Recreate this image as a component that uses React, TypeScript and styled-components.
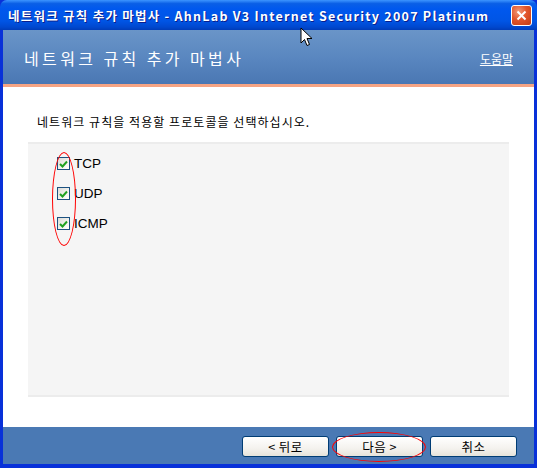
import { createGlobalStyle, styled } from 'styled-components';

const GlobalStyle = createGlobalStyle`
  html, body {
    margin: 0;
    padding: 0;
    background: #ffffff;
  }
  body {
    font-family: 'Noto Sans CJK KR', 'DejaVu Sans', sans-serif;
  }
`;

const Window = styled.div`
  position: relative;
  width: 537px;
  height: 468px;
  display: flex;
  flex-direction: column;
  background: #0831d9;
  box-sizing: border-box;
  overflow: hidden;
`;

const TitleBar = styled.div`
  height: 30px;
  display: flex;
  align-items: center;
  justify-content: space-between;
  padding: 0 5px 0 8px;
  border-radius: 7px 7px 0 0;
  background: linear-gradient(
    180deg,
    #3d95ff 0%,
    #0a5fe6 12%,
    #0058ee 30%,
    #0055e5 70%,
    #0048cf 90%,
    #003cb8 100%
  );
`;

const TitleText = styled.span`
  color: #ffffff;
  font-size: 12.5px;
  font-weight: 700;
  letter-spacing: 1.25px;
  white-space: nowrap;
  text-shadow: 1px 1px 0 #0a1e8c;
`;

const CloseButton = styled.div`
  width: 19px;
  height: 19px;
  border: 1px solid #ffffff;
  border-radius: 3px;
  display: flex;
  align-items: center;
  justify-content: center;
  background: radial-gradient(circle at 35% 30%, #f29a7a 0%, #e2562c 45%, #c23b12 100%);
`;

const Body = styled.div`
  flex: 1;
  display: flex;
  flex-direction: column;
  margin: 0 3px 4px 3px;
  background: #ffffff;
`;

const Header = styled.div`
  height: 54px;
  display: flex;
  align-items: center;
  justify-content: space-between;
  padding: 0 21px 0 21px;
  background: linear-gradient(180deg, #6a95c8 0%, #5a87c0 50%, #4a77b3 100%);
  border-bottom: 3px solid #f6a483;
`;

const HeaderTitle = styled.span`
  color: #ffffff;
  font-size: 16px;
  letter-spacing: 3.4px;
  margin-top: 2px;
`;

const HelpLink = styled.a`
  color: #ffffff;
  font-size: 12px;
  text-decoration: underline;
  margin-top: 2px;
`;

const Content = styled.div`
  flex: 1;
  display: flex;
  flex-direction: column;
  padding: 26px 25px 30px 25px;
`;

const Instruction = styled.p`
  margin: 0 0 12px 9px;
  font-size: 12px;
  color: #000000;
  letter-spacing: 1.05px;
`;

const Panel = styled.div`
  position: relative;
  flex: 1;
  display: flex;
  flex-direction: column;
  gap: 13px;
  padding: 11px 0 0 29px;
  background: #f5f5f5;
  border-top: 2px solid #ececec;
  border-bottom: 2px solid #ececec;
`;

const OptionRow = styled.label`
  display: flex;
  align-items: center;
  height: 17px;
  font-family: 'Liberation Sans', Arial, sans-serif;
  font-size: 13.5px;
  color: #000000;
`;

const Box = styled.span`
  width: 11px;
  height: 11px;
  border: 1px solid #1c5180;
  background: linear-gradient(135deg, #dcdcd7 0%, #f3f3ef 60%, #ffffff 100%);
  display: flex;
  align-items: center;
  justify-content: center;
  margin-right: 4px;
`;

const Footer = styled.div`
  height: 37px;
  display: flex;
  align-items: center;
  justify-content: flex-end;
  gap: 7px;
  padding: 0 17px 0 0;
  background: #4a79b4;
`;

const FooterButton = styled.button`
  position: relative;
  width: 87px;
  height: 21px;
  padding: 0;
  border: 1px solid #003c74;
  border-radius: 3px;
  background: linear-gradient(180deg, #ffffff 0%, #f4f2ee 60%, #e6e3da 100%);
  font-family: 'Noto Sans CJK KR', sans-serif;
  font-size: 12.5px;
  letter-spacing: 0.5px;
  color: #000000;
  display: flex;
  align-items: center;
  justify-content: center;
  margin-top: 2px;
`;

const Ellipse = styled.span<{ $w: number; $h: number; $left: number; $top: number }>`
  position: absolute;
  left: ${(p) => p.$left}px;
  top: ${(p) => p.$top}px;
  width: ${(p) => p.$w}px;
  height: ${(p) => p.$h}px;
  border: 1px solid #ff0000;
  border-radius: 50%;
  pointer-events: none;
`;

const Cursor = styled.svg`
  position: absolute;
  left: 300px;
  top: 27px;
`;

const Check = () => (
  <svg width="9" height="8" viewBox="0 0 9 8">
    <path d="M1 4 L3.5 6.5 L8 1.5" stroke="#21a121" strokeWidth="2" fill="none" />
  </svg>
);

const protocols = ['TCP', 'UDP', 'ICMP'];

const App = () => {
  return (
    <>
      <GlobalStyle />
      <Window>
        <TitleBar>
          <TitleText>네트워크 규칙 추가 마법사 - AhnLab V3 Internet Security 2007 Platinum</TitleText>
          <CloseButton>
            <svg width="11" height="11" viewBox="0 0 11 11">
              <path d="M1.5 1.5 L9.5 9.5 M9.5 1.5 L1.5 9.5" stroke="#ffffff" strokeWidth="2" />
            </svg>
          </CloseButton>
        </TitleBar>
        <Body>
          <Header>
            <HeaderTitle>네트워크 규칙 추가 마법사</HeaderTitle>
            <HelpLink>도움말</HelpLink>
          </Header>
          <Content>
            <Instruction>네트워크 규칙을 적용할 프로토콜을 선택하십시오.</Instruction>
            <Panel>
              {protocols.map((name) => (
                <OptionRow key={name}>
                  <Box>
                    <Check />
                  </Box>
                  {name}
                </OptionRow>
              ))}
              <Ellipse $left={24} $top={8} $w={22} $h={92} />
            </Panel>
          </Content>
          <Footer>
            <FooterButton>&lt; 뒤로</FooterButton>
            <FooterButton>
              다음 &gt;
              <Ellipse $left={-5} $top={-5} $w={92} $h={28} />
            </FooterButton>
            <FooterButton>취소</FooterButton>
          </Footer>
        </Body>
        <Cursor width="13" height="20" viewBox="0 0 13 20">
          <path
            d="M1 1 L1 16 L4.5 12.5 L7 18.5 L9.5 17.5 L7 11.5 L12 11.5 Z"
            fill="#ffffff"
            stroke="#000000"
            strokeWidth="1"
          />
        </Cursor>
      </Window>
    </>
  );
};

export default App;
